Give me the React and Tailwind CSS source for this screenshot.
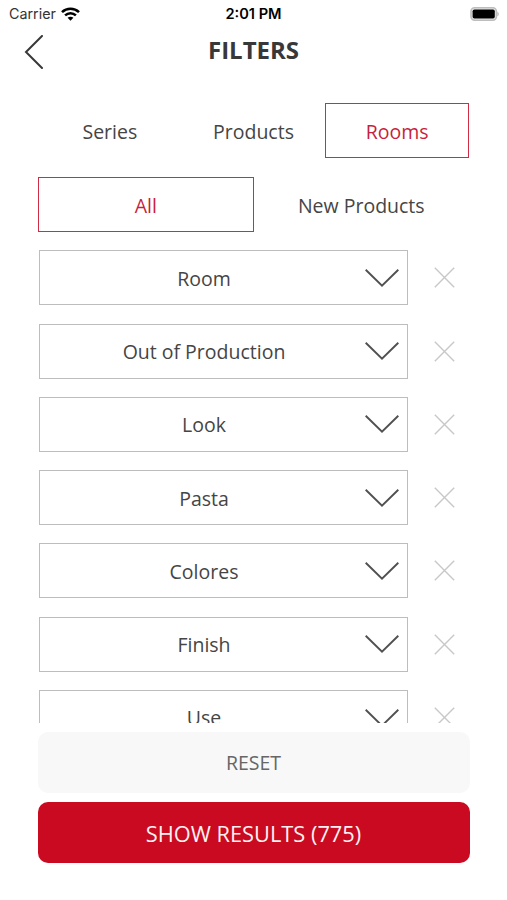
import React, { useState } from "react";

const tabs = ["Series", "Products", "Rooms"];
const subTabs = ["All", "New Products"];
const filters = ["Room", "Out of Production", "Look", "Pasta", "Colores", "Finish", "Use"];

function StatusBar() {
  return (
    <div className="grid h-[27px] grid-cols-3 items-center px-[8px] font-['Inter',sans-serif] text-black">
      <div className="flex items-center gap-[5px] pl-[1px]">
        <span className="text-[14.3px] text-[#333]">Carrier</span>
        <svg width="19" height="14" viewBox="0 0 19 14" fill="none" stroke="#000" strokeWidth="2.6">
          <path d="M1 5.1C5.8.6 13.2.6 18 5.1" />
          <path d="M4.1 8.4c3.1-2.9 7.7-2.9 10.8 0" />
          <path d="M9.5 13.7 6.6 10.8c1.6-1.5 4.2-1.5 5.8 0z" fill="#000" stroke="none" />
        </svg>
      </div>
      <span className="pt-[2px] text-center text-[14.6px] font-semibold whitespace-nowrap">2:01 PM</span>
      <svg className="justify-self-end" width="29" height="14" viewBox="0 0 29 14">
        <rect x="1" y=".8" width="25.4" height="12.4" rx="3.6" fill="#e8e8e8" stroke="#bdbdbd" strokeWidth="1.6" />
        <rect x="2.6" y="2.4" width="22.2" height="9.2" rx="1.8" fill="#000" />
        <path d="M27.3 4.7v4.6c2-.7 2-3.9 0-4.6z" fill="#bdbdbd" />
      </svg>
    </div>
  );
}

function Tab({ label, active, onClick }) {
  return (
    <button
      onClick={onClick}
      className={`h-[55px] flex-1 border-[1.5px] border-solid pt-[2px] text-[19.5px] ${
        active ? "border-[#d02c44] text-[#c81f3c]" : "border-transparent text-[#454545]"
      }`}
    >
      {label}
    </button>
  );
}

function FilterRow({ label }) {
  return (
    <div className="flex shrink-0 items-center">
      <button className="flex h-[55px] w-[369px] items-center border border-[#bdbdbd] pr-[8px] pl-[3px]">
        <span className="flex-1 pt-[1px] text-center text-[19.5px] text-[#454545]">{label}</span>
        <svg width="34" height="20" viewBox="0 0 34 20" fill="none" stroke="#505050" strokeWidth="1.9">
          <path d="M.7 1.8 17 17.7 33.3 1.8" />
        </svg>
      </button>
      <button className="ml-[26px]" aria-label={`Clear ${label}`}>
        <svg width="21" height="21" viewBox="0 0 21 21" stroke="#c8c8c8" strokeWidth="1.4">
          <path d="M.8.8l19.4 19.4M20.2.8.8 20.2" />
        </svg>
      </button>
    </div>
  );
}

export default function App() {
  const [tab, setTab] = useState("Rooms");
  const [subTab, setSubTab] = useState("All");

  return (
    <div className="flex h-[900px] w-[507px] flex-col overflow-hidden bg-white font-['Open_Sans',sans-serif]">
      <StatusBar />

      <header className="grid h-[50px] grid-cols-[60px_1fr_60px] items-center">
        <button className="pl-[24px]" aria-label="Back">
          <svg width="20" height="34" viewBox="0 0 20 34" fill="none" stroke="#383838" strokeWidth="2" strokeLinecap="round">
            <path d="M18 1 2 17l16 16" />
          </svg>
        </button>
        <h1 className="pb-[4px] text-center text-[24px] leading-[46px] font-bold text-[#383838]">FILTERS</h1>
      </header>

      <div className="mt-[26px] flex px-[38px]">
        {tabs.map((t) => (
          <Tab key={t} label={t} active={t === tab} onClick={() => setTab(t)} />
        ))}
      </div>
      <div className="mt-[19px] flex px-[38px]">
        {subTabs.map((t) => (
          <Tab key={t} label={t} active={t === subTab} onClick={() => setSubTab(t)} />
        ))}
      </div>

      <div className="mt-[18.3px] flex h-[472.7px] flex-col gap-[18.3px] overflow-hidden pl-[39px]">
        {filters.map((f) => (
          <FilterRow key={f} label={f} />
        ))}
      </div>

      <div className="mt-[9px] flex flex-col gap-[9px] pr-[37px] pl-[38px]">
        <button className="h-[61px] rounded-[10px] bg-[#f8f8f8] pt-[1px] pr-[1px] text-[19.5px] text-[#666]">RESET</button>
        <button className="h-[61px] rounded-[10px] bg-[#c90a20] pt-[3px] pr-[1px] text-[21.8px] text-[#fff0f1]">SHOW RESULTS (775)</button>
      </div>
    </div>
  );
}
